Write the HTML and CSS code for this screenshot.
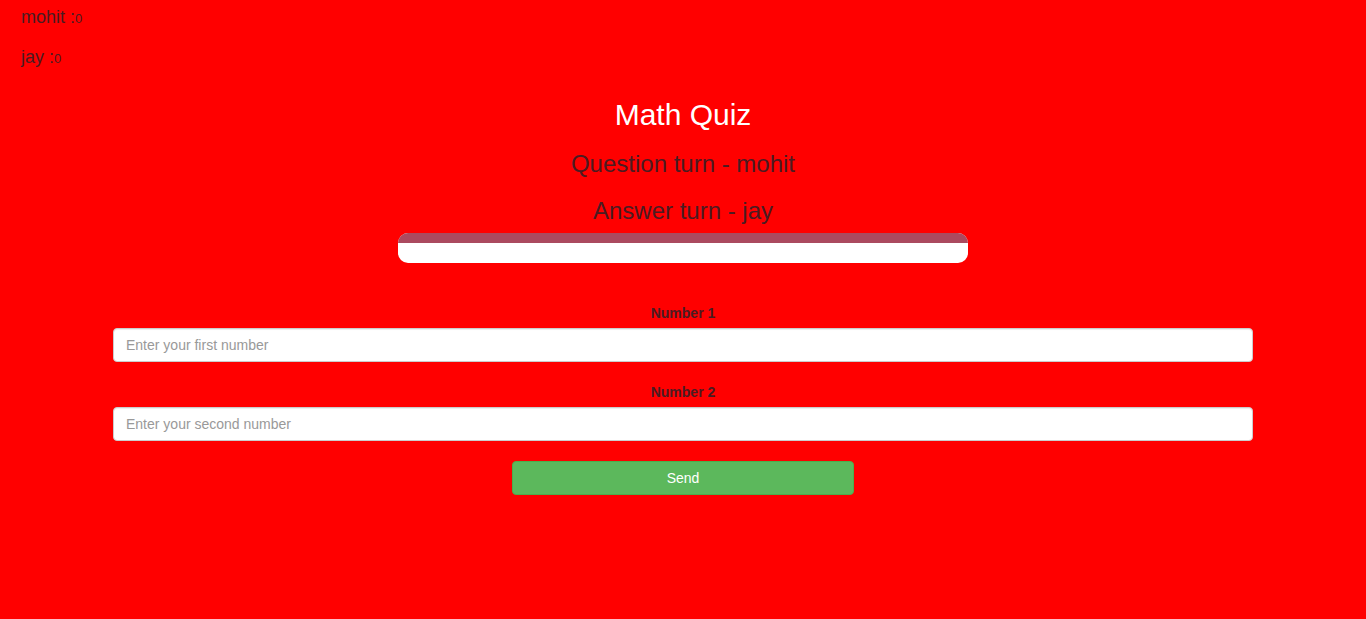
FILE: index.html
```html
<!DOCTYPE html>
<html>
<head>
<meta charset="utf-8">
<title>Math Quiz</title>
<link rel="stylesheet" href="styles.css">
</head>
<body>
  <div class="scores">
    <h4 class="score">mohit :<span class="points">0</span></h4>
    <h4 class="score">jay :<span class="points">0</span></h4>
  </div>
  <div class="container">
    <h2 class="title">Math Quiz</h2>
    <h3 class="turn turn-q">Question turn - mohit</h3>
    <h3 class="turn turn-a">Answer turn - jay</h3>
    <div class="bar"><div class="bar-fill"></div></div>
    <form class="quiz-form">
      <div class="form-group">
        <label class="label">Number 1</label>
        <input class="field" type="text" placeholder="Enter your first number">
      </div>
      <div class="form-group">
        <label class="label">Number 2</label>
        <input class="field" type="text" placeholder="Enter your second number">
      </div>
      <button class="send" type="button">Send</button>
    </form>
  </div>
</body>
</html>
```
FILE: styles.css
```css
* { box-sizing: border-box; }
html, body {
  margin: 0;
  padding: 0;
  background: #ff0000;
  font-family: "Liberation Sans", Arial, Helvetica, sans-serif;
  color: #4a1c22;
  height: 100%;
}
.scores {
  padding: 8px 0 0 21px;
}
.score {
  margin: 0 0 19.2px 0;
  font-size: 18px;
  line-height: 19.8px;
  font-weight: 400;
}
.points {
  font-size: 13px;
}
.container {
  width: 1170px;
  margin: 0 auto;
  padding: 0 15px;
  display: flex;
  flex-direction: column;
  align-items: center;
}
.title {
  margin: 10px 0 0 0;
  font-size: 30px;
  line-height: 33px;
  font-weight: 400;
  color: #fff;
}
.turn {
  font-size: 24px;
  line-height: 26.4px;
  font-weight: 400;
  margin: 0;
}
.turn-q { margin-top: 20px; }
.turn-a { margin-top: 20.4px; }
.bar {
  margin-top: 8.8px;
  width: 570px;
  height: 30px;
  background: #fff;
  border-radius: 10px;
  overflow: hidden;
}
.bar-fill {
  height: 10px;
  background: #ab4a5f;
}
.quiz-form {
  width: 100%;
  margin-top: 40.5px;
  display: flex;
  flex-direction: column;
  align-items: center;
}
.form-group {
  width: 100%;
  display: flex;
  flex-direction: column;
  align-items: center;
  margin-bottom: 20px;
}
.label {
  font-size: 14px;
  line-height: 20px;
  font-weight: 700;
  margin-bottom: 5px;
}
.field {
  width: 100%;
  height: 34px;
  padding: 6px 12px;
  font-family: inherit;
  font-size: 14px;
  line-height: 20px;
  color: #555;
  background: #fff;
  border: 1px solid #ccc;
  border-radius: 4px;
  box-shadow: inset 0 1px 1px rgba(0,0,0,.075);
}
.field::placeholder { color: #999; }
.send {
  width: 342px;
  height: 34px;
  font-family: inherit;
  font-size: 14px;
  line-height: 20px;
  color: #fff;
  background: #5cb85c;
  border: 1px solid #4cae4c;
  border-radius: 4px;
}
```
